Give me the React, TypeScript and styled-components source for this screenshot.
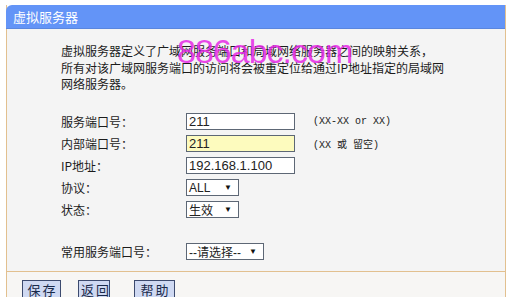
import styled, { createGlobalStyle } from "styled-components";

const GlobalStyle = createGlobalStyle`
  html, body {
    margin: 0;
    padding: 0;
    background: #ffffff;
  }
  body {
    font-family: "Noto Sans CJK SC", "Liberation Sans", sans-serif;
    font-size: 12px;
    color: #222;
  }
`;

const Page = styled.div`
  width: 507px;
  height: 297px;
  overflow: hidden;
  padding: 5px 0 0 6px;
  box-sizing: border-box;
`;

const Panel = styled.div`
  width: 500px;
  border-left: 1px solid #e2c08f;
  border-right: 1px solid #e2c08f;
  box-sizing: border-box;
`;

const Header = styled.div`
  height: 23px;
  background: #6394f7;
  border-bottom: 1px solid #5a86de;
  border-top-left-radius: 6px;
  margin-left: -1px;
  color: #ffffff;
  font-size: 13px;
  line-height: 23px;
  padding-left: 7px;
`;

const Body = styled.div`
  position: relative;
  background: #f4f4f4;
  height: 243px;
  padding: 14px 0 0 54px;
  box-sizing: border-box;
  border-bottom: 1px solid #e2c08f;
`;

const Intro = styled.p`
  margin: 0;
  font-size: 12px;
  line-height: 16.5px;
  color: #1c1c1c;
`;

const Form = styled.div<{ $top: number }>`
  display: grid;
  grid-template-columns: 125px auto 1fr;
  align-items: center;
  grid-auto-rows: 22px;
  margin-top: ${(p) => p.$top}px;
`;

const Label = styled.div`
  font-size: 12px;
  color: #1c1c1c;
`;

const TextInput = styled.div<{ $yellow?: boolean }>`
  width: 109px;
  height: 17px;
  box-sizing: border-box;
  border: 1px solid #5d6775;
  background: ${(p) => (p.$yellow ? "#fdfbbe" : "#ffffff")};
  font-family: "Liberation Sans", Arial, sans-serif;
  font-size: 13px;
  line-height: 15px;
  padding-left: 2px;
  color: #222;
`;

const Select = styled.div<{ $width: number }>`
  width: ${(p) => p.$width}px;
  height: 17px;
  box-sizing: border-box;
  border: 1px solid #5d6775;
  background: #ffffff;
  display: flex;
  align-items: center;
  justify-content: space-between;
  padding: 0 6px 0 2px;
  font-family: "Liberation Sans", "Noto Sans CJK SC", sans-serif;
  font-size: 12px;
  color: #222;
`;

const Arrow = styled.span`
  font-size: 8px;
  color: #111;
`;

const Hint = styled.div`
  padding-left: 18px;
  font-family: "Liberation Mono", "Noto Sans CJK SC", monospace;
  font-size: 10px;
  color: #222;
`;

const Footer = styled.div`
  display: flex;
  padding: 8px 0 0 15px;
  background: #f7f6f4;
  height: 24px;
`;

const Button = styled.button<{ $width: number; $mr: number }>`
  width: ${(p) => p.$width}px;
  height: 20px;
  margin-right: ${(p) => p.$mr}px;
  padding: 0;
  background: #cfd9f2;
  border: 1px solid #3c4a6e;
  font-family: "Noto Sans CJK SC", sans-serif;
  font-size: 13px;
  letter-spacing: 2px;
  text-indent: 2px;
  white-space: nowrap;
  color: #1a2a4a;
  line-height: 18px;
`;

const Watermark = styled.div`
  position: absolute;
  left: 170px;
  top: 5px;
  font-family: "Liberation Sans", Arial, sans-serif;
  font-size: 34px;
  line-height: 1;
  letter-spacing: -1px;
  color: rgba(230, 40, 230, 0.85);
  pointer-events: none;
`;

export default function App() {
  return (
    <>
      <GlobalStyle />
      <Page>
        <Panel>
          <Header>虚拟服务器</Header>
          <Body>
            <Intro>
              虚拟服务器定义了广域网服务端口和局域网络服务器之间的映射关系，
              <br />
              所有对该广域网服务端口的访问将会被重定位给通过IP地址指定的局域网
              <br />
              网络服务器。
            </Intro>
            <Form $top={18}>
              <Label>服务端口号：</Label>
              <TextInput>211</TextInput>
              <Hint>(XX-XX or XX)</Hint>

              <Label>内部端口号：</Label>
              <TextInput $yellow>211</TextInput>
              <Hint>(XX 或 留空)</Hint>

              <Label>IP地址：</Label>
              <TextInput>192.168.1.100</TextInput>
              <span />

              <Label>协议：</Label>
              <Select $width={53}>
                ALL<Arrow>▼</Arrow>
              </Select>
              <span />

              <Label>状态：</Label>
              <Select $width={53}>
                生效<Arrow>▼</Arrow>
              </Select>
              <span />
            </Form>
            <Form $top={20}>
              <Label>常用服务端口号：</Label>
              <Select $width={78}>
                --请选择--<Arrow>▼</Arrow>
              </Select>
              <span />
            </Form>
            <Watermark>886abc.com</Watermark>
          </Body>
          <Footer>
            <Button $width={39} $mr={17}>保存</Button>
            <Button $width={32} $mr={24}>返回</Button>
            <Button $width={41} $mr={0}>帮助</Button>
          </Footer>
        </Panel>
      </Page>
    </>
  );
}
